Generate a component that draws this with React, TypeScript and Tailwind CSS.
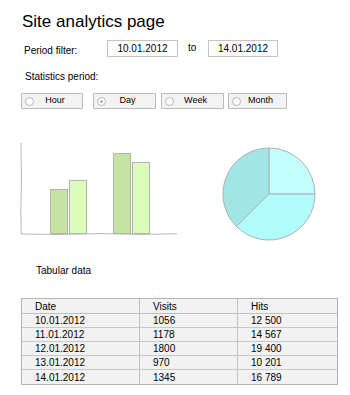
import React from "react";

const font = { fontFamily: '"Comic Sans MS", "Liberation Sans", Arial, sans-serif' };

function Radio({ label, checked, w, ml }: { label: string; checked?: boolean; w: string; ml: string }) {
  return (
    <div className={`${w} ${ml} h-[16px] flex items-center border border-[#b9b9b9] bg-[#f3f3f3] rounded-[1px]`}>
      <div className="ml-[3px] w-[9px] h-[9px] rounded-full border border-[#b5b5b5] bg-white flex items-center justify-center shrink-0">
        {checked && <div className="w-[3px] h-[3px] rounded-full bg-[#b0b0b0]" />}
      </div>
      <div className="flex-1 text-center text-[9px] text-black pr-[6px]">{label}</div>
    </div>
  );
}

function BarChart() {
  return (
    <svg width="190" height="100" viewBox="0 0 190 100">
      <path d="M21 3 L21.5 40 L20.8 70 L21.3 94 M21 94 L60 94.5 L100 93.6 L140 94.4 L177 93.8" stroke="#b8b8b8" strokeWidth="1" fill="none" />
      <rect x="50.5" y="49.5" width="17" height="44" fill="#c5e4a2" stroke="#b3b3b3" />
      <rect x="69.5" y="40.5" width="17" height="53" fill="#dbfdb9" stroke="#b3b3b3" />
      <rect x="113.5" y="13.5" width="17" height="80" fill="#c5e4a2" stroke="#b3b3b3" />
      <rect x="132.5" y="22.5" width="17" height="71" fill="#dbfdb9" stroke="#b3b3b3" />
    </svg>
  );
}

function Pie() {
  const cx = 69, cy = 57, r = 46;
  const pt = (deg: number) => {
    const a = ((deg - 90) * Math.PI) / 180;
    return `${cx + r * Math.cos(a)} ${cy + r * Math.sin(a)}`;
  };
  return (
    <svg width="140" height="110" viewBox="0 0 140 110">
      <path d={`M${cx} ${cy} L${pt(0)} A${r} ${r} 0 0 1 ${pt(90)} Z`} fill="#c3fefe" stroke="#b0b0b0" />
      <path d={`M${cx} ${cy} L${pt(90)} A${r} ${r} 0 0 1 ${pt(225)} Z`} fill="#b1fdfd" stroke="#b0b0b0" />
      <path d={`M${cx} ${cy} L${pt(225)} A${r} ${r} 0 0 1 ${pt(360)} Z`} fill="#a2e5e5" stroke="#b0b0b0" />
    </svg>
  );
}

const rows = [
  ["10.01.2012", "1056", "12 500"],
  ["11.01.2012", "1178", "14 567"],
  ["12.01.2012", "1800", "19 400"],
  ["13.01.2012", "970", "10 201"],
  ["14.01.2012", "1345", "16 789"],
];

export default function App() {
  return (
    <div className="w-[350px] h-[395px] bg-white text-black overflow-hidden" style={font}>
      <div className="pl-[22px] pt-[10px] text-[17px] leading-[24px]">Site analytics page</div>

      <div className="flex items-center mt-[6px] h-[17px]">
        <div className="pl-[24px] w-[107px] text-[10px] pt-[3px]">Period filter:</div>
        <div className="w-[71px] h-[17px] border border-[#c4c4c4] bg-white flex items-center justify-center text-[10px]">10.01.2012</div>
        <div className="w-[30px] pl-[10px] text-[10px] pb-[2px]">to</div>
        <div className="w-[70px] h-[17px] border border-[#c4c4c4] bg-white flex items-center justify-center text-[10px]">14.01.2012</div>
      </div>

      <div className="pl-[25px] mt-[13px] text-[10px] leading-[14px]">Statistics period:</div>

      <div className="flex mt-[9px]">
        <Radio label="Hour" w="w-[62px]" ml="ml-[21px]" />
        <Radio label="Day" checked w="w-[63px]" ml="ml-[10px]" />
        <Radio label="Week" w="w-[63px]" ml="ml-[5px]" />
        <Radio label="Month" w="w-[59px]" ml="ml-[4px]" />
      </div>

      <div className="flex mt-[31px] h-[110px]">
        <BarChart />
        <div className="-mt-[3px] ml-[10px]">
          <Pie />
        </div>
      </div>

      <div className="pl-[36px] mt-[14px] text-[10px] leading-[14px]">Tabular data</div>

      <div className="ml-[21px] mt-[20px] w-[317px] border border-[#b5b5b5] bg-[#f2f2f2] text-[10px]">
        <div className="flex h-[15px] items-center border-b border-[#c0c0c0]">
          <div className="w-[118px] pl-[13px] border-r border-[#c0c0c0] h-full flex items-center">Date</div>
          <div className="w-[98px] pl-[13px] border-r border-[#c0c0c0] h-full flex items-center">Visits</div>
          <div className="flex-1 pl-[13px]">Hits</div>
        </div>
        {rows.map((r, i) => (
          <div key={i} className={`flex h-[14px] items-center ${i < rows.length - 1 ? "border-b border-[#c8c8c8]" : ""}`}>
            <div className="w-[118px] pl-[13px] border-r border-[#c0c0c0] h-full flex items-center">{r[0]}</div>
            <div className="w-[98px] pl-[13px] border-r border-[#c0c0c0] h-full flex items-center">{r[1]}</div>
            <div className="flex-1 pl-[13px]">{r[2]}</div>
          </div>
        ))}
      </div>
    </div>
  );
}
